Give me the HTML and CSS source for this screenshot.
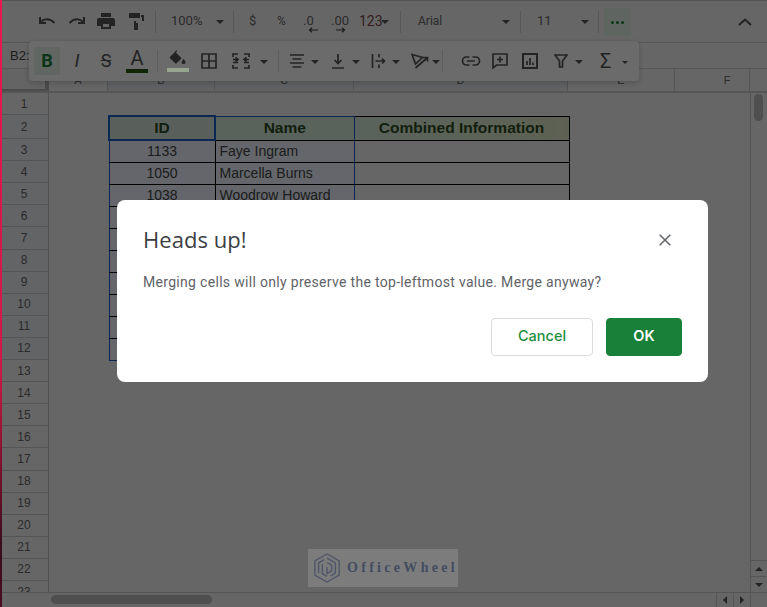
FILE: index.html
```html
<!DOCTYPE html>
<html lang="en">
<head>
<meta charset="utf-8">
<title>Heads up</title>
<link rel="stylesheet" href="styles.css">
</head>
<body>
<div class="app">
  <header class="toolbar">
    <svg class="ic undo" viewBox="0 0 20 20"><path d="M3 6v6h6M3.500 11.500C6 8 12 6.500 17.500 12" /></svg>
    <svg class="ic redo" viewBox="0 0 20 20"><path d="M17 6v6h-6M16.500 11.500C14 8 8 6.500 2.500 12" /></svg>
    <svg class="ic print" viewBox="0 0 20 20"><path class="fill" d="M5 2h10v4H5zM3 7h14a2 2 0 0 1 2 2v6h-4v3H5v-3H1V9a2 2 0 0 1 2-2zm4 6v3h6v-3z"/></svg>
    <svg class="ic paint" viewBox="0 0 20 20"><path class="fill" d="M3 2h11v5H3zM15 4h3v6h-8v2h2v7H8v-9h8V6h-1z"/></svg>
    <i class="sep s1"></i>
    <span class="tb zoom">100%</span><i class="caret c1"></i>
    <i class="sep s2"></i>
    <span class="tb dollar">$</span>
    <span class="tb pct">%</span>
    <span class="tb dec">.0<svg viewBox="0 0 10 6"><path d="M10 3H2M4 .8 1.500 3 4 5.200"/></svg></span>
    <span class="tb dec2">.00<svg viewBox="0 0 10 6"><path d="M0 3h8M6 .8 8.500 3 6 5.200"/></svg></span>
    <span class="tb num">123</span><i class="caret c2"></i>
    <i class="sep s3"></i>
    <span class="tb font">Arial</span><i class="caret c3"></i>
    <i class="sep s4"></i>
    <span class="tb size">11</span><i class="caret c4"></i>
    <i class="sep s5"></i>
    <span class="more"><b></b><b></b><b></b></span>
    <svg class="collapse" viewBox="0 0 14 8"><path d="M1 7l6-5.500L13 7"/></svg>
  </header>

  <div class="formula"><span class="nameref">B2:</span></div>

  <div class="colheads">
    <span class="corner"></span>
    <span class="ch a">A</span>
    <span class="ch b sel">B</span>
    <span class="ch c sel">C</span>
    <span class="ch d sel">D</span>
    <span class="ch e">E</span>
    <span class="ch f">F</span>
    <span class="ch rest"></span>
  </div>

  <div class="body">
    <div class="rowheads">
      <span class="r">1</span><span class="r tall sel">2</span><span class="r sel">3</span><span class="r sel">4</span><span class="r sel">5</span><span class="r sel">6</span><span class="r sel">7</span><span class="r sel">8</span><span class="r sel">9</span><span class="r sel">10</span><span class="r sel">11</span><span class="r sel">12</span><span class="r">13</span><span class="r">14</span><span class="r">15</span><span class="r">16</span><span class="r">17</span><span class="r">18</span><span class="r">19</span><span class="r">20</span><span class="r">21</span><span class="r">22</span><span class="r">23</span>
    </div>
    <div class="canvas">
      <table class="data">
        <colgroup><col class="w1"><col class="w2"><col class="w3"></colgroup>
        <tr class="head"><th class="id">ID</th><th class="nm">Name</th><th class="ci">Combined Information</th></tr>
        <tr><td class="id">1133</td><td class="nm">Faye Ingram</td><td></td></tr>
        <tr><td class="id">1050</td><td class="nm">Marcella Burns</td><td></td></tr>
        <tr><td class="id">1038</td><td class="nm">Woodrow Howard</td><td></td></tr>
        <tr><td class="id"></td><td class="nm"></td><td></td></tr>
        <tr><td class="id"></td><td class="nm"></td><td></td></tr>
        <tr><td class="id"></td><td class="nm"></td><td></td></tr>
        <tr><td class="id"></td><td class="nm"></td><td></td></tr>
        <tr><td class="id"></td><td class="nm"></td><td></td></tr>
        <tr><td class="id"></td><td class="nm"></td><td></td></tr>
        <tr><td class="id"></td><td class="nm"></td><td></td></tr>
      </table>
    </div>
    <aside class="vscroll">
      <span class="vthumb"></span>
      <span class="varrows">
        <span class="arrow"><i class="tri up"></i></span>
        <span class="arrow"><i class="tri down"></i></span>
      </span>
    </aside>
  </div>

  <footer class="hscroll">
    <span class="hcorner"></span>
    <span class="htrack"><span class="hthumb"></span></span>
    <span class="harrow"><i class="tri left"></i></span>
    <span class="harrow"><i class="tri right"></i></span>
    <span class="hend"></span>
  </footer>
</div>

<div class="floatbar">
  <span class="bold">B</span>
  <span class="italic">I</span>
  <span class="strike">S</span>
  <span class="textcolor">A<i></i></span>
  <i class="fsep f1"></i>
  <span class="fill-ic"><svg viewBox="0 0 20 16"><path class="fill" d="M8 0l1.200 1.200L7.700 2.700l6.300 6-5.500 5.500a1 1 0 0 1-1.400 0L1.500 8.700a1 1 0 0 1 0-1.400L6.500 2.400z"/><path class="fill" d="M16 9.500s2 2.300 2 3.500a2 2 0 0 1-4 0c0-1.200 2-3.500 2-3.500z"/></svg><i></i></span>
  <svg class="ic2 borders" viewBox="0 0 16 16"><path d="M1 1h14v14H1zM8 1v14M1 8h14"/></svg>
  <svg class="ic2 merge" viewBox="0 0 18 16"><path d="M1 4V1h5M12 1h5v3M1 12v3h5M12 15h5v-3M1 6.500h5M3.500 4.500l2.500 2-2.500 2M17 6.500h-5M14.500 4.500l-2.500 2 2.500 2M1 9.500h5M17 9.500h-5"/></svg>
  <i class="caret fc1"></i>
  <i class="fsep f2"></i>
  <svg class="ic2 halign" viewBox="0 0 16 16"><path d="M1 2h14M3.500 6h9M1 10h14M3.500 14h9"/></svg>
  <i class="caret fc2"></i>
  <svg class="ic2 valign" viewBox="0 0 14 16"><path d="M1 15h12M7 1v9M3.500 7 7 10.500 10.500 7"/></svg>
  <i class="caret fc3"></i>
  <svg class="ic2 wrap" viewBox="0 0 16 16"><path d="M1.500 1v14M8 1v3.500M8 11.500V15M4.500 8h9M11 5.500 13.500 8 11 10.500"/></svg>
  <i class="caret fc4"></i>
  <svg class="ic2 rotate" viewBox="0 0 18 16"><path d="M1 1.500l10.500 3-7 6.500zM4.500 15 16 5M12 4.500h4.500v4"/></svg>
  <i class="caret fc5"></i>
  <i class="fsep f3"></i>
  <svg class="ic2 link" viewBox="0 0 20 12"><path d="M8.500 2H5.500a4 4 0 0 0 0 8h3M11.500 2h3a4 4 0 0 1 0 8h-3M6 6h8"/></svg>
  <svg class="ic2 comment" viewBox="0 0 16 16"><path d="M1 1h14v11H4.500L1 15zM8 3.500v6M5 6.500h6"/></svg>
  <svg class="ic2 chart" viewBox="0 0 16 16"><path class="thick" d="M1 1h14v14H1z"/><path d="M5 8v4M8 5v7M11 9.500V12"/></svg>
  <svg class="ic2 filter" viewBox="0 0 14 14"><path d="M1 1h12L8.500 7v6h-3V7z"/></svg>
  <i class="caret fc6"></i>
  <span class="sigma">Σ</span>
  <i class="caret small fc7"></i>
</div>

<div class="scrim"></div>
<i class="stripe"></i>

<div class="watermark">
  <svg viewBox="0 0 30 32"><path d="M15 1 28 8.500v15L15 31 2 23.500v-15z"/><path d="M15 5.500 24 10.500v11l-5 3M6 21.500v-11l6-3.500M10 12v10l5 3M15 10l5 3v6l-5 3V15"/></svg>
  <span>OfficeWheel</span>
</div>

<section class="dialog">
  <div class="dlg-head">
    <h1>Heads up!</h1>
    <svg class="close" viewBox="0 0 12 12"><path d="M.7.7l10.600 10.600M11.300.7.700 11.300"/></svg>
  </div>
  <p>Merging cells will only preserve the top-leftmost value. Merge anyway?</p>
  <div class="actions">
    <button class="cancel">Cancel</button>
    <button class="ok">OK</button>
  </div>
</section>
</body>
</html>
```
FILE: styles.css
```css
* { box-sizing: border-box; }
html, body { margin: 0; padding: 0; width: 767px; height: 607px; overflow: hidden; }
body { font-family: "Liberation Sans", Arial, sans-serif; background: #f4f4f4; position: relative; }
i { display: block; font-style: normal; }

.app { width: 767px; height: 607px; display: flex; flex-direction: column; padding-top: 1px; border-top: 1px solid #c8c8c8; }

/* top toolbar */
.toolbar { height: 41px; flex: none; position: relative; background: #f4f4f4; border-bottom: 1px solid #d0d0d0; color: #555; }
.toolbar > * { position: absolute; }
.ic { width: 20px; height: 20px; top: 9px; fill: none; stroke: #555; stroke-width: 2; }
.ic .fill { fill: #555; stroke: none; }
.undo { left: 37px; }
.redo { left: 67px; }
.print { left: 96px; }
.paint { left: 126px; }
.sep { width: 1px; height: 22px; top: 9px; background: #d0d0d0; }
.s1 { left: 155px; } .s2 { left: 233px; } .s3 { left: 400px; } .s4 { left: 520px; } .s5 { left: 598px; }
.tb { font-family: Roboto, sans-serif; font-size: 13px; line-height: 16px; top: 11px; color: #666; }
.zoom { left: 171px; }
.dollar { left: 249px; }
.pct { left: 277px; font-size: 12px; }
.dec { left: 303px; }
.dec2 { left: 331px; }
.dec svg, .dec2 svg { position: absolute; left: 5px; top: 14px; width: 10px; height: 6px; fill: none; stroke: #444; stroke-width: 1.200; overflow: visible; }
.num { left: 359px; font-size: 14px; color: #7a4b4b; }
.font { left: 418px; color: #666; font-size: 12px; }
.size { left: 537px; font-size: 13px; }
.caret { width: 0; height: 0; border-left: 4px solid transparent; border-right: 4px solid transparent; border-top: 4px solid #555; }
.toolbar .caret { top: 18px; }
.c1 { left: 216px; } .c2 { left: 381px; } .c3 { left: 502px; } .c4 { left: 581px; }
.more { left: 604px; top: 6px; width: 27px; height: 28px; background: #e3f2e8; display: flex; align-items: center; justify-content: center; gap: 2px; }
.more b { width: 3px; height: 3px; border-radius: 50%; background: #188038; }
.collapse { left: 738px; top: 16px; width: 14px; height: 8px; fill: none; stroke: #555; stroke-width: 2; }

/* formula */
.formula { height: 26px; flex: none; background: #f4f4f4; border-bottom: 1px solid #d0d0d0; padding: 6px 0 0 10px; }
.nameref { font-size: 13px; line-height: 14px; color: #444; display: block; }

/* column heads */
.colheads { height: 24px; flex: none; display: grid; grid-template-columns: 49px 59px 107px 139px 214px 107px 75px 1fr; background: #f4f4f4; border-bottom: 2px solid #cacaca; }
.corner { background: #eee; border-right: 4px solid #b4b4b4; border-bottom: 2px solid #b4b4b4; }
.ch { display: flex; align-items: center; justify-content: center; font-size: 11px; color: #666; border-right: 1px solid #cacaca; }
.ch.sel { background: #e6e9ef; }
.ch.f { padding-left: 30px; }
.ch.rest { border-right: 0; }

.body { flex: 1; min-height: 0; display: flex; overflow: hidden; }
.rowheads { width: 49px; flex: none; background: #f4f4f4; border-right: 1px solid #c4c4c4; overflow: hidden; }
.r { display: flex; align-items: center; justify-content: center; height: 22.100px; font-size: 12px; color: #666; border-bottom: 1px solid #cacaca; }
.r.tall { height: 24px; }
.r.sel { background: #eceef3; }
.canvas { flex: 1; min-width: 0; background: #f4f4f4; padding: 22px 0 0 59px; }

/* table */
.data { border-collapse: collapse; table-layout: fixed; width: 460px; }
.w1 { width: 106px; } .w2 { width: 139px; } .w3 { width: 215px; }
.data tr { height: 22.100px; }
.data tr.head { height: 24px; }
.data th, .data td { border: 1px solid #000; padding: 0 4px; font-size: 14px; color: #444; overflow: hidden; white-space: nowrap; }
.data th { font-size: 15.500px; color: #2c4a22; font-weight: 700; text-align: center; }
.data td.id { text-align: center; background: #eef4ff; border-left: 1px solid #1a5fc0; }
.data td.nm { text-align: left; background: #eef4ff; border-right: 1px solid #1a5fc0; }
.data th.id { background: #d4e4d8; border: 2px solid #1a5fc0; }
.data th.nm { background: #d4eada; border-top: 1px solid #1a5fc0; border-right: 1px solid #1a5fc0; }
.data th.ci { background: linear-gradient(90deg, #d4eada, #dfe8c4); }
.data tr:last-child td { border-bottom: 1px solid #1a5fc0; }

/* scrollbars */
.vscroll { width: 17px; flex: none; background: #f4f4f4; border-left: 1px solid #cacaca; position: relative; display: flex; flex-direction: column; justify-content: flex-end; }
.vthumb { position: absolute; left: 3px; top: 1px; width: 9px; height: 27px; border-radius: 5px; background: #bcbcbc; }
.varrows { display: flex; flex-direction: column; }
.arrow { height: 16px; display: flex; align-items: center; justify-content: center; border-top: 1px solid #cacaca; }
.tri { width: 0; height: 0; border: 4px solid transparent; }
.tri.up { border-bottom-color: #555; border-top-width: 0; }
.tri.down { border-top-color: #555; border-bottom-width: 0; }
.tri.left { border-right-color: #555; border-left-width: 0; }
.tri.right { border-left-color: #555; border-right-width: 0; }
.hscroll { height: 15px; flex: none; display: flex; background: #f4f4f4; border-top: 1px solid #cacaca; }
.hcorner { width: 49px; }
.htrack { flex: 1; padding: 2px 0 0 2px; }
.hthumb { display: block; width: 161px; height: 9px; border-radius: 5px; background: #bcbcbc; }
.harrow { width: 17px; display: flex; align-items: center; justify-content: center; border-left: 1px solid #cacaca; }
.hend { width: 17px; border-left: 1px solid #cacaca; }

/* floating toolbar */
.floatbar { position: absolute; left: 29px; top: 41px; width: 610px; height: 40px; background: #fff; border-radius: 4px; box-shadow: 0 2px 6px rgba(0,0,0,.2); color: #444; }
.floatbar > * { position: absolute; }
.bold { left: 5px; top: 6px; width: 26px; height: 28px; background: #e6f2e9; color: #188038; font: 700 18px/28px Roboto, sans-serif; text-align: center; }
.italic { left: 38px; top: 6px; width: 20px; font: italic 400 19px/28px Roboto, sans-serif; text-align: center; color: #555; }
.strike { left: 67px; top: 6px; width: 20px; font: 400 18px/28px Roboto, sans-serif; text-align: center; color: #555; text-decoration: line-through; }
.textcolor { left: 97px; top: 5px; width: 22px; font: 400 20px/24px Roboto, sans-serif; text-align: center; color: #555; }
.textcolor i { height: 4px; background: #245a10; margin-top: -1px; }
.fsep { width: 1px; height: 22px; top: 9px; background: #ddd; }
.f1 { left: 128px; } .f2 { left: 249px; } .f3 { left: 413px; }
.fill-ic { left: 138px; top: 9px; width: 22px; }
.fill-ic svg { display: block; width: 20px; height: 15px; margin-left: 1px; }
.fill-ic svg .fill { fill: #555; }
.fill-ic i { height: 4px; margin-top: 3px; background: #97a590; position: relative; z-index: 1; }
.ic2 { fill: none; stroke: #555; stroke-width: 1.700; }
.thick { stroke-width: 2; }
.borders { left: 172px; top: 12px; width: 16px; height: 16px; }
.merge { left: 203px; top: 12px; width: 18px; height: 16px; }
.fc1 { left: 231px; top: 19px; }
.halign { left: 260px; top: 12px; width: 16px; height: 16px; }
.fc2 { left: 282px; top: 19px; }
.valign { left: 302px; top: 12px; width: 14px; height: 16px; }
.fc3 { left: 323px; top: 19px; }
.wrap { left: 342px; top: 12px; width: 16px; height: 16px; }
.fc4 { left: 363px; top: 19px; }
.rotate { left: 382px; top: 12px; width: 18px; height: 16px; }
.fc5 { left: 403px; top: 19px; }
.link { left: 432px; top: 14px; width: 20px; height: 12px; }
.comment { left: 463px; top: 12px; width: 16px; height: 16px; }
.chart { left: 493px; top: 12px; width: 16px; height: 16px; }
.filter { left: 525px; top: 13px; width: 14px; height: 14px; }
.fc6 { left: 546px; top: 19px; }
.sigma { left: 571px; top: 7px; font: 400 20px/26px Roboto, sans-serif; color: #555; }
.fc7 { left: 593px; top: 20px; }
.caret.small { border-width: 3px 3px 0; }

/* modal */
.scrim { position: absolute; left: 0; top: 0; width: 767px; height: 607px; background: rgba(0,0,0,.58); }
.stripe { position: absolute; left: 0; top: 0; width: 2px; height: 607px; background: linear-gradient(180deg, #e8174f 0, #d01846 60%, #3a0c1c 90%, #4a0c20 100%); }

/* watermark */
.watermark { position: absolute; left: 308px; top: 549px; width: 150px; height: 38px; background: #7c7c7c; display: flex; align-items: center; gap: 6px; padding-left: 5px; }
.watermark svg { width: 28px; height: 32px; fill: none; stroke: #50566a; stroke-width: 1.500; flex: none; }
.watermark span { font: 700 14px/1 "Liberation Serif", serif; letter-spacing: 3.300px; color: #454c60; white-space: nowrap; }

.dialog { position: absolute; left: 117px; top: 200px; width: 591px; height: 182px; background: #fff; border-radius: 8px; padding: 24px 26px 0; }
.dlg-head { display: flex; justify-content: space-between; align-items: flex-start; height: 30px; }
h1 { margin: 0; font: 400 22px/30px "Open Sans", Roboto, sans-serif; color: #3c4043; letter-spacing: .05px; }
.close { width: 12px; height: 12px; margin: 10px 11px 0 0; fill: none; stroke: #5f6368; stroke-width: 1.500; }
.dialog p { margin: 18px 0 0; font: 400 14px/20px Roboto, sans-serif; color: #5f6368; letter-spacing: .31px; }
.actions { display: flex; justify-content: flex-end; gap: 13px; margin-top: 26px; }
.actions button { height: 38px; border-radius: 4px; font: 500 14.500px/1 Inter, Roboto, sans-serif; padding: 0 0 2px; }
.cancel { width: 102px; background: #fff; color: #1e8e3e; border: 1px solid #dadce0; }
.ok { width: 76px; background: #188038; color: #fff; border: 1px solid #188038; font-weight: 600 !important; }
```
